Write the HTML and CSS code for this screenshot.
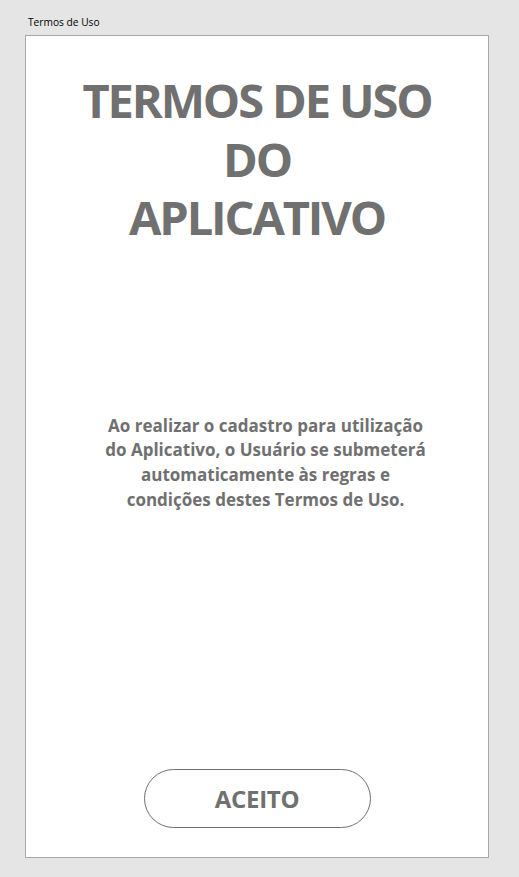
FILE: index.html
```html
<!DOCTYPE html>
<html lang="pt">
<head>
<meta charset="utf-8">
<title>Termos de Uso</title>
<link rel="stylesheet" href="styles.css">
</head>
<body>
<div class="page">
  <div class="label">Termos de Uso</div>
  <div class="frame">
    <h1 class="title">TERMOS DE USO<br>DO<br>APLICATIVO</h1>
    <p class="text">Ao realizar o cadastro para utilização<br>do Aplicativo, o Usuário se submeterá<br>automaticamente às regras e<br>condições destes Termos de Uso.</p>
    <div class="actions"><button class="btn">ACEITO</button></div>
  </div>
</div>
</body>
</html>
```
FILE: styles.css
```css
html, body {
  margin: 0;
  padding: 0;
  background: #e5e5e5;
}
body {
  width: 519px;
  height: 877px;
  overflow: hidden;
  font-family: "Open Sans", "Noto Sans", sans-serif;
}
.page {
  padding: 15px 0 0 25px;
}
.label {
  font-size: 10.2px;
  line-height: 15px;
  height: 20px;
  padding-left: 3px;
  color: #000;
  font-family: "Open Sans", sans-serif;
}
.frame {
  box-sizing: border-box;
  width: 464px;
  height: 823px;
  background: #fff;
  border: 1px solid #a8a8a8;
  display: flex;
  flex-direction: column;
  align-items: center;
}
.title {
  margin: 35px 0 0;
  font-size: 47px;
  line-height: 58.5px;
  letter-spacing: -2.1px;
  font-weight: 700;
  color: #707070;
  text-align: center;
}
.text {
  margin: 167px 0 0;
  padding-left: 17px;
  font-size: 17px;
  line-height: 24.7px;
  font-weight: 700;
  color: #707070;
  text-align: center;
}
.actions {
  margin-top: auto;
  padding-bottom: 29px;
}
.btn {
  box-sizing: border-box;
  width: 227px;
  height: 59px;
  border: 1px solid #707070;
  border-radius: 30px;
  background: #fff;
  color: #707070;
  font-family: "Open Sans", sans-serif;
  font-size: 24px;
  font-weight: 700;
  letter-spacing: -0.3px;
  padding: 0;
}
```
